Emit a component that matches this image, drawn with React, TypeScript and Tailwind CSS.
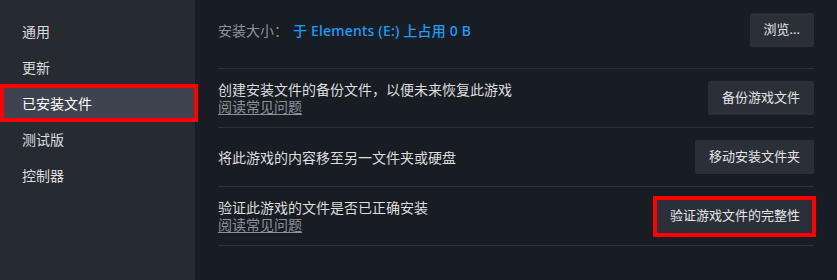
const FONT = 'font-["Noto_Sans","Noto_Sans_CJK_SC",sans-serif]';

const NAV = ['通用', '更新', '已安装文件', '测试版', '控制器'];
const ACTIVE = '已安装文件';

function SideNav() {
  return (
    <nav className="relative flex w-[195px] shrink-0 flex-col bg-[#262a31] pt-[13px]">
      {NAV.map((label) => (
        <div
          key={label}
          className={
            label === ACTIVE
              ? 'flex h-[36px] items-center bg-[#3d4450] pl-[22px] text-[14px] text-white'
              : 'flex h-[36px] items-center pl-[22px] text-[14px] text-[#dcdedf]'
          }
        >
          {label}
        </div>
      ))}
    </nav>
  );
}

function Btn({ children, marked }: { children: React.ReactNode; marked?: boolean }) {
  return (
    <div className="relative">
      <button className="h-[34px] rounded-[2px] bg-[#2b2f37] px-[14px] text-[13px] text-[#e4e6e7]">
        {children}
      </button>
      {marked ? (
        <div className="pointer-events-none absolute -top-[3px] -right-[2px] -bottom-[4px] -left-[3px] border-[4px] border-[#ff0000]" />
      ) : null}
    </div>
  );
}

function Row({ title, faq, action, marked }: { title: string; faq?: boolean; action: string; marked?: boolean }) {
  return (
    <div className="flex h-[59px] items-center justify-between border-b border-[#2c3139]">
      <div className="flex flex-col text-[14px] leading-[17px]">
        <div className="h-[17px] text-[#dcdedf]">{title}</div>
        {faq ? <div className="h-[17px] text-[#8b929a] underline underline-offset-2">阅读常见问题</div> : null}
      </div>
      <Btn marked={marked}>{action}</Btn>
    </div>
  );
}

export default function App() {
  return (
    <div className={`relative flex h-[280px] w-[837px] overflow-hidden bg-[#181c23] ${FONT}`}>
      <SideNav />
      <main className="flex flex-1 flex-col pl-[23px] pr-[23px]">
        <div className="flex h-[69px] items-start justify-between border-b border-[#2c3139] pt-[13px]">
          <div className="flex h-[34px] items-center gap-[5px] text-[14px]">
            <span className="text-[#8b929a]">安装大小：</span>
            <span className="font-medium tracking-[0.2px] text-[#1a9fff]">于 Elements (E:) 上占用 0 B</span>
          </div>
          <Btn>浏览...</Btn>
        </div>
        <Row title="创建安装文件的备份文件，以便未来恢复此游戏" faq action="备份游戏文件" />
        <Row title="将此游戏的内容移至另一文件夹或硬盘" action="移动安装文件夹" />
        <Row title="验证此游戏的文件是否已正确安装" faq action="验证游戏文件的完整性" marked />
      </main>
      <div className="pointer-events-none absolute left-0 top-[84px] h-[38px] w-[198px] border-[4px] border-[#ff0000]" />
    </div>
  );
}
